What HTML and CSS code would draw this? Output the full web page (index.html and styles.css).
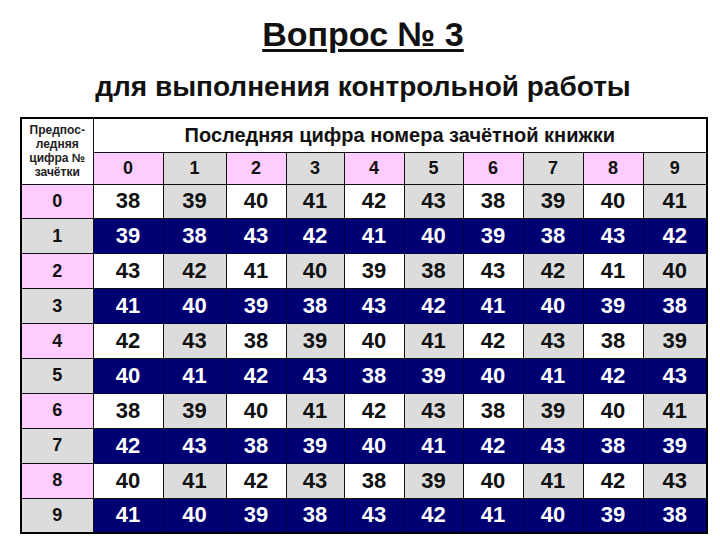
FILE: index.html
```html
<!DOCTYPE html>
<html lang="ru">
<head>
<meta charset="utf-8">
<link rel="stylesheet" href="styles.css">
</head>
<body>
<div class="page">
  <h1 class="title">Вопрос № 3</h1>
  <h2 class="subtitle">для выполнения контрольной работы</h2>
  <table class="grid">
    <colgroup>
      <col class="c-first"><col class="c0"><col class="c1"><col class="c2"><col class="c3"><col class="c4"><col class="c5"><col class="c6"><col class="c7"><col class="c8"><col class="c9">
    </colgroup>
    <thead>
      <tr class="h1">
        <th class="corner" rowspan="2">Предпос-<br>ледняя<br>цифра №<br>зачётки</th>
        <th class="big" colspan="10">Последняя цифра номера зачётной книжки</th>
      </tr>
      <tr class="h2">
        <th class="pink">0</th><th class="gray">1</th><th class="pink">2</th><th class="gray">3</th><th class="pink">4</th><th class="gray">5</th><th class="pink">6</th><th class="gray">7</th><th class="pink">8</th><th class="gray">9</th>
      </tr>
    </thead>
    <tbody>
      <tr class="light"><th class="pink">0</th><td>38</td><td>39</td><td>40</td><td>41</td><td>42</td><td>43</td><td>38</td><td>39</td><td>40</td><td>41</td></tr>
      <tr class="dark"><th class="gray">1</th><td>39</td><td>38</td><td>43</td><td>42</td><td>41</td><td>40</td><td>39</td><td>38</td><td>43</td><td>42</td></tr>
      <tr class="light"><th class="pink">2</th><td>43</td><td>42</td><td>41</td><td>40</td><td>39</td><td>38</td><td>43</td><td>42</td><td>41</td><td>40</td></tr>
      <tr class="dark"><th class="gray">3</th><td>41</td><td>40</td><td>39</td><td>38</td><td>43</td><td>42</td><td>41</td><td>40</td><td>39</td><td>38</td></tr>
      <tr class="light"><th class="pink">4</th><td>42</td><td>43</td><td>38</td><td>39</td><td>40</td><td>41</td><td>42</td><td>43</td><td>38</td><td>39</td></tr>
      <tr class="dark"><th class="gray">5</th><td>40</td><td>41</td><td>42</td><td>43</td><td>38</td><td>39</td><td>40</td><td>41</td><td>42</td><td>43</td></tr>
      <tr class="light"><th class="pink">6</th><td>38</td><td>39</td><td>40</td><td>41</td><td>42</td><td>43</td><td>38</td><td>39</td><td>40</td><td>41</td></tr>
      <tr class="dark"><th class="gray">7</th><td>42</td><td>43</td><td>38</td><td>39</td><td>40</td><td>41</td><td>42</td><td>43</td><td>38</td><td>39</td></tr>
      <tr class="light"><th class="pink">8</th><td>40</td><td>41</td><td>42</td><td>43</td><td>38</td><td>39</td><td>40</td><td>41</td><td>42</td><td>43</td></tr>
      <tr class="dark"><th class="gray">9</th><td>41</td><td>40</td><td>39</td><td>38</td><td>43</td><td>42</td><td>41</td><td>40</td><td>39</td><td>38</td></tr>
    </tbody>
  </table>
</div>
</body>
</html>
```
FILE: styles.css
```css
html, body {
  margin: 0;
  padding: 0;
  background: #ffffff;
}
.page {
  width: 720px;
  height: 540px;
  font-family: "Liberation Sans", Arial, sans-serif;
  color: #111111;
  padding-top: 16px;
  box-sizing: border-box;
}
.title {
  margin: 0 0 0 6px;
  text-align: center;
  font-size: 34px;
  line-height: 36px;
  font-weight: bold;
  text-decoration: underline;
  text-decoration-thickness: 3px;
  text-underline-offset: 3px;
}
.subtitle {
  margin: 19px 0 0 6px;
  text-align: center;
  font-size: 28px;
  line-height: 32px;
  font-weight: bold;
}
.grid {
  margin: 14px 0 0 20px;
  width: 686px;
  table-layout: fixed;
  border-collapse: collapse;
  border: 2px solid #000;
}
.c-first { width: 72px; }
.c0 { width: 70px; }
.c1 { width: 63px; }
.c2 { width: 60px; }
.c3 { width: 58px; }
.c4 { width: 60px; }
.c5 { width: 59px; }
.c6 { width: 60px; }
.c7 { width: 60px; }
.c8 { width: 60px; }
.c9 { width: 64px; }
.grid th, .grid td {
  border: 1px solid #111;
  padding: 0;
  text-align: center;
  font-weight: bold;
}
.h1 { height: 34px; }
.h2 { height: 32px; }
.corner {
  font-size: 12px;
  line-height: 14px;
  color: #222;
  background: #fff;
  border-bottom: 1px solid #111;
}
.big {
  font-size: 20px;
  background: #fff;
  border-bottom: 1px solid #111;
}
.h2 th { font-size: 18px; }
tbody tr { height: 34.9px; }
tbody th { font-size: 18px; }
tbody td { font-size: 22px; }
.pink { background: #ffccff; }
.gray { background: #dcdcdc; }
.light td { background: #fff; }
.light td:nth-of-type(even) { background: #dcdcdc; }
.dark td {
  background: #000072;
  color: #fff;
  border-color: #000040;
}
```
